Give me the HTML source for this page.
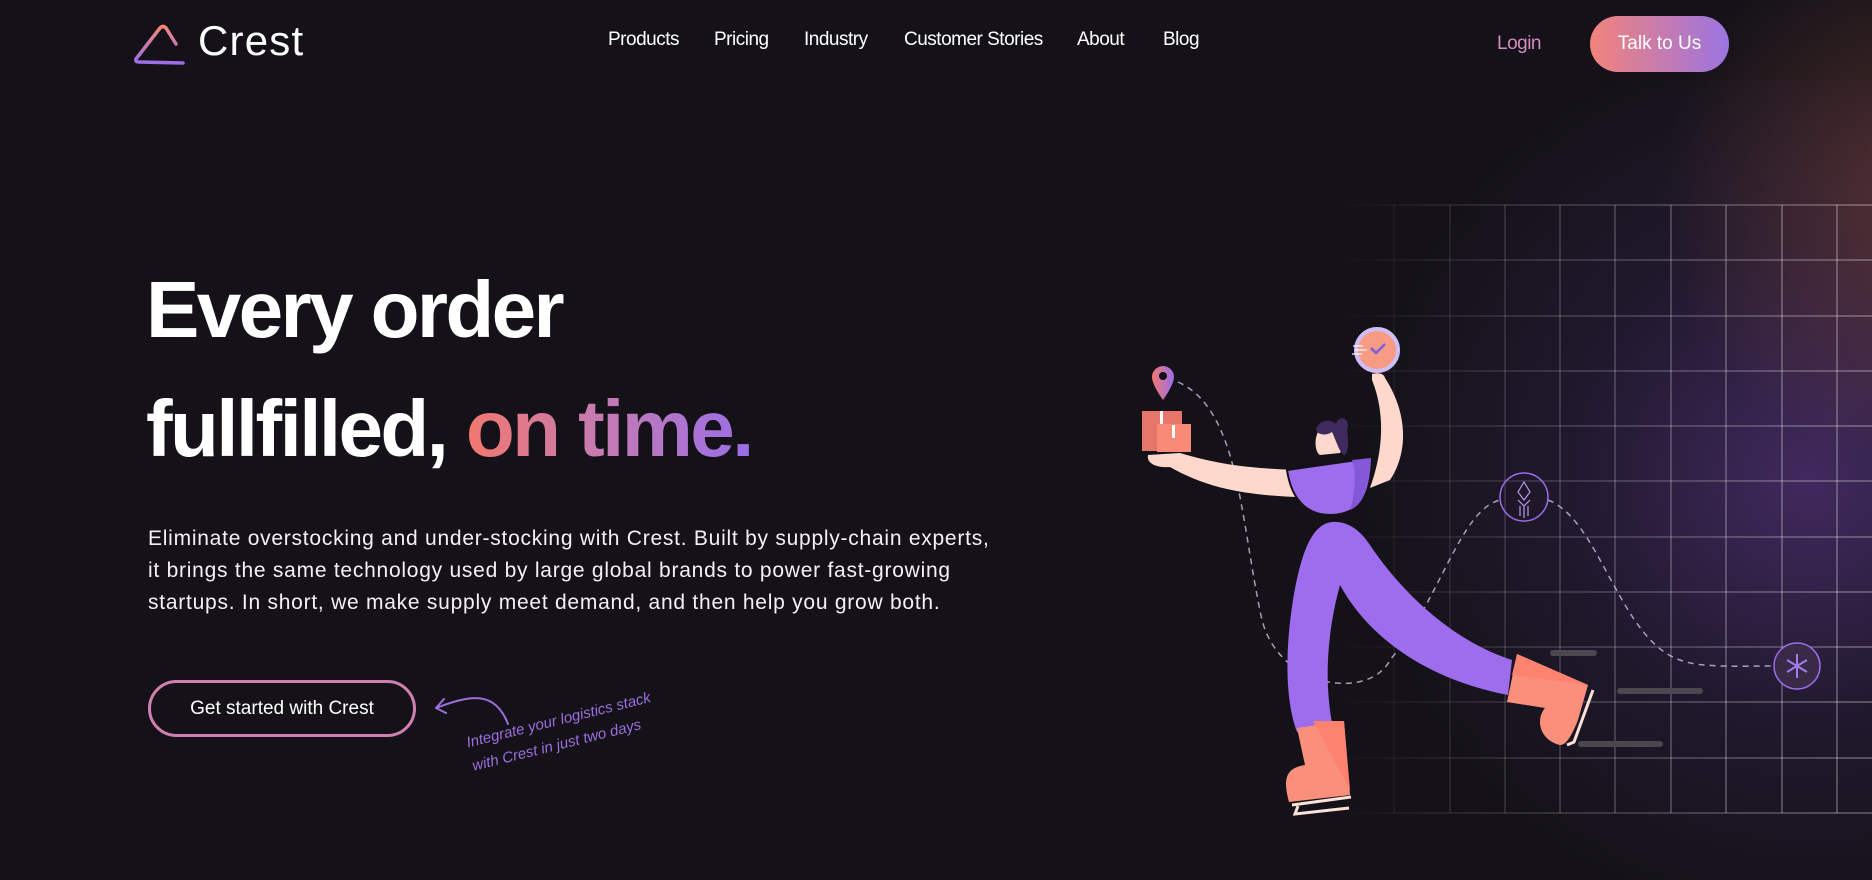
<!DOCTYPE html>
<html><head><meta charset="utf-8">
<style>
*{margin:0;padding:0;box-sizing:border-box}
html,body{width:1872px;height:863px;overflow:hidden;background:#141218;font-family:"Liberation Sans","DejaVu Sans",sans-serif;color:#fff}
.abs{position:absolute}
.nav a{position:absolute;top:29px;font-size:19px;color:#fff;text-decoration:none;letter-spacing:-0.5px}
h1{position:absolute;left:146px;top:250px;font-size:80px;font-weight:700;line-height:119px;letter-spacing:-2.6px}
.grad{background:linear-gradient(90deg,#f2786e,#c77bb0 45%,#9a6ee8);-webkit-background-clip:text;background-clip:text;color:transparent}
p.lead{position:absolute;left:148px;top:523px;width:900px;font-size:21px;line-height:32px;color:#f4f1f6;letter-spacing:0.75px}
</style></head><body>
<div class="abs" style="left:1250px;top:80px;width:800px;height:800px;background:radial-gradient(circle at 560px 400px,rgba(120,70,180,0.45),rgba(80,50,130,0.2) 35%,rgba(20,18,24,0) 65%)"></div>
<div class="abs" style="left:1550px;top:0;width:500px;height:450px;background:radial-gradient(circle at 380px 200px,rgba(170,90,70,0.4),rgba(20,18,24,0) 60%)"></div>
<svg class="abs" style="left:0;top:0" width="1872" height="863">
<defs>
<linearGradient id="gf" gradientUnits="userSpaceOnUse" x1="1340" y1="0" x2="1872" y2="0"><stop offset="0" stop-color="#fff" stop-opacity="0"/><stop offset="0.35" stop-color="#fff" stop-opacity="0.16"/><stop offset="1" stop-color="#fff" stop-opacity="0.33"/></linearGradient>
<linearGradient id="lg" x1="0" y1="0" x2="0" y2="1"><stop offset="0" stop-color="#f7857a"/><stop offset="1" stop-color="#9a6ee8"/></linearGradient>
<linearGradient id="pg" x1="0" x2="1"><stop offset="0" stop-color="#f2786e"/><stop offset="1" stop-color="#9a6ee8"/></linearGradient>
</defs>
<g stroke="url(#gf)" stroke-width="1.5">
<line x1="1340" y1="205" x2="1872" y2="205"/><line x1="1340" y1="260" x2="1872" y2="260"/><line x1="1340" y1="316" x2="1872" y2="316"/><line x1="1340" y1="371" x2="1872" y2="371"/><line x1="1340" y1="426" x2="1872" y2="426"/><line x1="1340" y1="481" x2="1872" y2="481"/><line x1="1340" y1="537" x2="1872" y2="537"/><line x1="1340" y1="592" x2="1872" y2="592"/><line x1="1340" y1="647" x2="1872" y2="647"/><line x1="1340" y1="702" x2="1872" y2="702"/><line x1="1340" y1="758" x2="1872" y2="758"/><line x1="1340" y1="813" x2="1872" y2="813"/>
</g>
<g stroke="#fff" stroke-width="1.5">
<line x1="1394" y1="205" x2="1394" y2="813" stroke-opacity="0.06"/><line x1="1450" y1="205" x2="1450" y2="813" stroke-opacity="0.1"/><line x1="1505" y1="205" x2="1505" y2="813" stroke-opacity="0.15"/><line x1="1560" y1="205" x2="1560" y2="813" stroke-opacity="0.19"/><line x1="1615" y1="205" x2="1615" y2="813" stroke-opacity="0.23"/><line x1="1671" y1="205" x2="1671" y2="813" stroke-opacity="0.27"/><line x1="1726" y1="205" x2="1726" y2="813" stroke-opacity="0.3"/><line x1="1782" y1="205" x2="1782" y2="813" stroke-opacity="0.32"/><line x1="1837" y1="205" x2="1837" y2="813" stroke-opacity="0.33"/>
</g>
<path d="M136 59 L160 28 Q163 25 166 28 L176 44 M136 59 Q135 62 139 62 L183 63" fill="none" stroke="url(#lg)" stroke-width="3.5" stroke-linecap="round" stroke-linejoin="round"/>
<path d="M1178 382 C1240 410 1240 520 1262 620 C1280 690 1370 700 1390 660 C1440 600 1460 510 1500 500 M1548 500 C1600 520 1620 640 1680 660 C1700 668 1740 666 1772 666" fill="none" stroke="#c8c0e0" stroke-width="1.5" stroke-dasharray="6 5" opacity="0.8"/>
<g stroke="#4a474f" stroke-width="6" stroke-linecap="round"><line x1="1553" y1="653" x2="1594" y2="653"/><line x1="1620" y1="691" x2="1700" y2="691"/><line x1="1581" y1="744" x2="1660" y2="744"/></g>
<ellipse cx="1524" cy="497" rx="24" ry="24" fill="none" stroke="#9a6ee8" stroke-width="1.5"/>
<path d="M1524 482 l-6 10 l6 8 l6-8z M1518 500 l6 6 l6-6 M1520 506 v10 M1524 506 v12 M1528 506 v10" fill="none" stroke="#b89af0" stroke-width="1.2"/>
<circle cx="1797" cy="666" r="23" fill="#3a2a48" stroke="#9a6ee8" stroke-width="1.5"/>
<g stroke="#a07cf0" stroke-width="2"><line x1="1797" y1="654" x2="1797" y2="678"/><line x1="1787" y1="660" x2="1807" y2="672"/><line x1="1787" y1="672" x2="1807" y2="660"/></g>
<path d="M1163 366 a11 11 0 0 1 11 11 c0 8 -11 23 -11 23 c0 0 -11 -15 -11 -23 a11 11 0 0 1 11 -11z" fill="url(#pg)"/><circle cx="1163" cy="376" r="4" fill="#141218"/>
<rect x="1142" y="411" width="40" height="40" fill="#e6756a"/><rect x="1157" y="424" width="34" height="28" fill="#fa8a78"/>
<rect x="1160" y="411" width="3" height="13" fill="#fff"/><rect x="1172" y="425" width="3" height="13" fill="#fff"/>
<path d="M1336 522 C1310 520 1300 560 1293 600 C1285 650 1285 700 1297 732 L1333 728 C1325 690 1325 640 1340 585 C1370 640 1430 680 1508 695 L1512 660 C1450 640 1400 590 1370 545 C1360 530 1348 522 1336 522z" fill="#9d6ded"/>
<path d="M1297 728 L1344 721 L1350 795 L1289 802 C1283 780 1285 768 1305 765z" fill="#fa907c"/>
<path d="M1313 721 L1344 721 L1350 790z" fill="#fd8370"/>
<path d="M1292 805 L1351 797 M1298 806 l-3 8 l54 -6" stroke="#fde0d6" stroke-width="3" fill="none"/>
<path d="M1517 654 L1588 685 L1578 720 C1570 740 1565 745 1560 745 C1540 740 1535 720 1545 708 L1507 702z" fill="#fa907c"/>
<path d="M1517 654 L1588 685 L1512 675z" fill="#fd8370"/>
<path d="M1593 690 L1574 742 L1567 745" stroke="#fde0d6" stroke-width="3" fill="none"/>
<path d="M1148 455 C1146 465 1160 468 1170 467 C1210 490 1250 495 1297 497 L1295 470 C1250 468 1220 465 1180 453z" fill="#fdd8cd"/>
<path d="M1372 374 C1380 372 1384 374 1385 378 C1406 410 1410 450 1390 480 L1370 488 C1380 460 1388 420 1372 380z" fill="#fdd8cd"/>
<path d="M1287 470 L1371 458 C1372 490 1362 515 1330 515 C1300 515 1290 490 1287 470z" fill="#9d6ded" stroke="#141218" stroke-width="2"/>
<path d="M1352 460 L1371 458 C1370 490 1362 505 1350 510 C1356 490 1356 470 1352 460z" fill="#8458d8"/>
<path d="M1318 432 C1314 440 1315 452 1320 455 L1340 453 C1345 445 1345 432 1335 426z" fill="#fdd8cd"/>
<path d="M1316 430 C1318 420 1330 418 1336 424 C1338 416 1348 416 1348 426 C1345 432 1352 445 1345 455 C1340 455 1336 440 1332 432 C1326 436 1318 435 1316 430z" fill="#3f2a60"/>
<ellipse cx="1377" cy="350" rx="21" ry="21" fill="#f89b84" stroke="#cdbff5" stroke-width="4"/>
<path d="M1371 348 l5 5 l9 -9" stroke="#7a5ce0" stroke-width="2.5" fill="none"/>
<g stroke="#fff" stroke-width="1.5" opacity="0.8"><line x1="1353" y1="346" x2="1363" y2="346"/><line x1="1355" y1="350" x2="1367" y2="350"/><line x1="1352" y1="354" x2="1362" y2="354"/></g>
<path d="M508 724 C495 690 470 695 436 708 M436 708 l8 -9 M436 708 l10 5" stroke="#9b6fe0" stroke-width="2" fill="none" stroke-linecap="round"/>
</svg>

<div class="abs" style="left:198px;top:17px;font-size:42px;font-weight:500;letter-spacing:1.2px">Crest</div>
<div class="nav">
<a style="left:608px">Products</a><a style="left:714px">Pricing</a><a style="left:804px">Industry</a><a style="left:904px">Customer Stories</a><a style="left:1077px">About</a><a style="left:1163px">Blog</a>
<a style="left:1497px;top:33px;color:#d58ac0">Login</a>
</div>
<div class="abs" style="left:1590px;top:16px;width:139px;height:56px;border-radius:28px;background:linear-gradient(90deg,#f2837a,#9b74e2);font-size:19px;display:flex;align-items:center;justify-content:center">Talk to Us</div>

<h1>Every order<br>fullfilled, <span class="grad">on time.</span></h1>
<p class="lead">Eliminate overstocking and under-stocking with Crest. Built by supply-chain experts,<br>it brings the same technology used by large global brands to power fast-growing<br>startups. In short, we make supply meet demand, and then help you grow both.</p>

<div class="abs" style="left:148px;top:680px;width:268px;height:57px;border:3.5px solid #d07fae;border-radius:29px;font-size:19px;display:flex;align-items:center;justify-content:center">Get started with Crest</div>
<div class="abs" style="left:464px;top:732px;font-family:'Liberation Sans Narrow','Liberation Sans',sans-serif;font-style:italic;font-size:15px;line-height:24px;color:#9b6fe0;transform:rotate(-14deg);transform-origin:0 0">Integrate your logistics stack<br>with Crest in just two days</div>
</body></html>
